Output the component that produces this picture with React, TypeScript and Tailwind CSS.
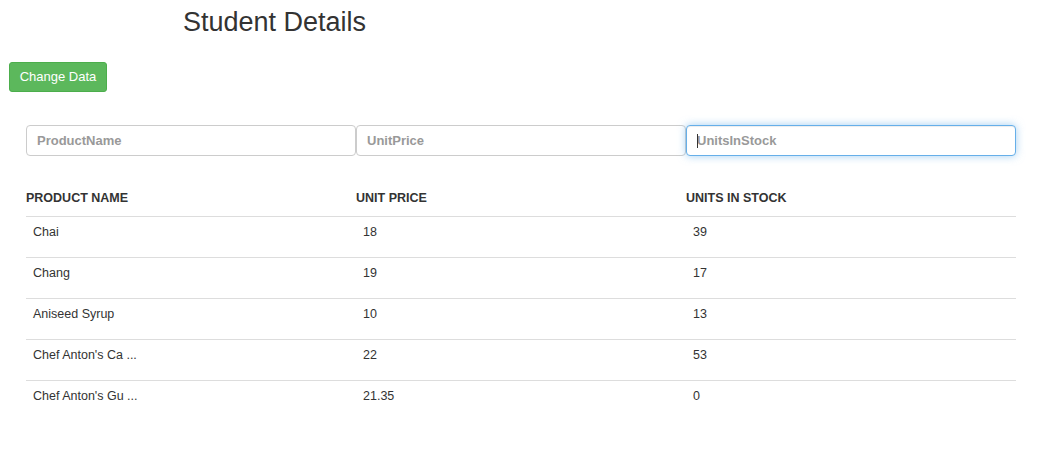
const products = [
  { name: "Chai", price: "18", stock: "39" },
  { name: "Chang", price: "19", stock: "17" },
  { name: "Aniseed Syrup", price: "10", stock: "13" },
  { name: "Chef Anton's Ca ...", price: "22", stock: "53" },
  { name: "Chef Anton's Gu ...", price: "21.35", stock: "0" },
];

const inputBase =
  "w-[330px] h-[31px] rounded-[4px] border bg-white px-[10px] text-[13px] font-bold text-[#555] placeholder:text-[#999] outline-none";

const App = () => {
  return (
    <div className="min-h-[463px] bg-white text-[#333] font-['Liberation_Sans',Arial,sans-serif]">
      <h2 className="pt-[6px] pl-[183px] text-[27px] leading-[32px] font-normal">Student Details</h2>

      <div className="pl-[9px] mt-[24px]">
        <button className="w-[98px] h-[30px] rounded-[3px] border border-[#4cae4c] bg-[#5cb85c] text-[13px] text-white">
          Change Data
        </button>
      </div>

      <div className="mt-[33px] pl-[26px] flex">
        <input className={`${inputBase} border-[#ccc]`} placeholder="ProductName" />
        <input className={`${inputBase} border-[#ccc]`} placeholder="UnitPrice" />
        <div className="relative">
          <input
            className={`${inputBase} border-[#66afe9] shadow-[inset_0_1px_1px_rgba(0,0,0,0.075),0_0_8px_rgba(102,175,233,0.6)]`}
            placeholder="UnitsInStock"
          />
          <span className="absolute left-[11px] top-[9px] w-px h-[14px] bg-[#333]" />
        </div>
      </div>

      <div className="mt-[33px] ml-[26px] w-[990px] text-[12.5px] leading-[16px]">
        <div className="grid grid-cols-3 font-bold pt-[1px] pb-[10px] border-b border-[#ddd]">
          <div>PRODUCT NAME</div>
          <div>UNIT PRICE</div>
          <div>UNITS IN STOCK</div>
        </div>
        <div className="divide-y divide-[#ddd]">
          {products.map((p) => (
            <div key={p.name} className="grid grid-cols-3 h-[41px] pt-[7px]">
              <div className="pl-[7px]">{p.name}</div>
              <div className="pl-[7px]">{p.price}</div>
              <div className="pl-[7px]">{p.stock}</div>
            </div>
          ))}
        </div>
      </div>
    </div>
  );
};

export default App;
